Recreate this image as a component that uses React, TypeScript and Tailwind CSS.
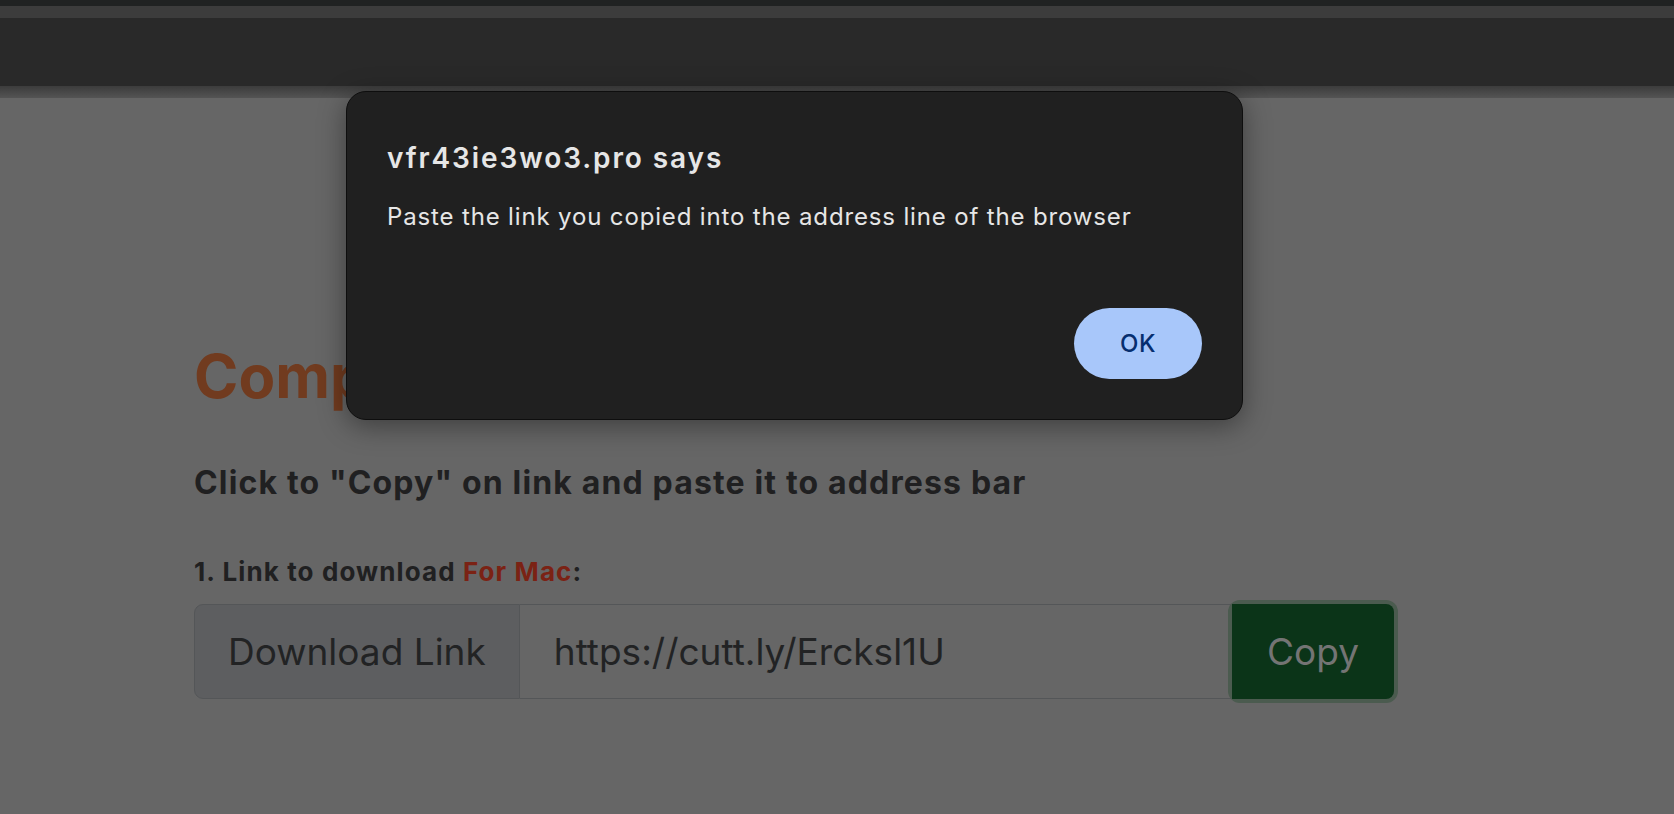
import React from "react";

export default function App() {
  return (
    <div
      className="relative w-full h-[814px] overflow-hidden bg-[#666666]"
      style={{ fontFamily: "Inter, 'Noto Sans', 'Liberation Sans', sans-serif" }}
    >
      {/* browser chrome (dimmed) */}
      <div className="h-[6px] bg-[#202222]" />
      <div className="h-[12px] bg-[#3c3c3c]" />
      <div className="h-[68px] bg-[#292929]" />
      <div className="h-[12px] bg-gradient-to-b from-[#3c3c3c] to-[#545454]" />

      {/* page content */}
      <div className="pl-[194px] pt-[248px] flex flex-col">
        <h1 className="text-[60px] leading-none font-bold text-[#713b1f] whitespace-nowrap">
          Complete steps
        </h1>
        <h2 className="mt-[61px] text-[32px] leading-none font-bold text-[#202021] tracking-[1.15px]">
          Click to "Copy" on link and paste it to address bar
        </h2>
        <p className="mt-[60px] text-[26px] leading-none font-bold text-[#202021] tracking-[1.1px]">
          1. Link to download <span className="text-[#7b2214]">For Mac</span>:
        </p>
        <div className="mt-[19px] flex w-[1200px] h-[95px]">
          <div className="flex items-center px-[33px] bg-[#5d5e60] border border-[#545658] rounded-l-[9px] text-[37px] text-[#222324]">
            Download Link
          </div>
          <div className="flex-1 flex items-center pl-[34px] border-y border-[#545658] text-[37px] text-[#222324]">
            https://cutt.ly/Ercksl1U
          </div>
          <div className="relative">
            <div className="absolute -inset-[4px] rounded-[12px] bg-[#4b5b4f]" />
            <div className="relative h-full flex items-center px-[35px] bg-[#0b3418] rounded-r-[8px] text-[37px] text-[#747474]">
              Copy
            </div>
          </div>
        </div>
      </div>

      {/* alert dialog */}
      <div className="absolute left-[346px] top-[91px] w-[897px] h-[329px] flex flex-col bg-[#202020] border border-[#0e0e0e] rounded-[20px] shadow-[0_6px_28px_rgba(0,0,0,0.4)] px-[40px] pt-[52px] pb-[40px]">
        <div className="text-[28px] leading-none font-semibold text-[#e6e6e6] tracking-[1.9px]">
          vfr43ie3wo3.pro says
        </div>
        <div className="mt-[33px] text-[24px] leading-none text-[#e6e6e6] tracking-[0.85px]">
          Paste the link you copied into the address line of the browser
        </div>
        <div className="mt-auto flex justify-end">
          <div className="w-[128px] h-[71px] rounded-full bg-[#a8c7fa] flex items-center justify-center text-[24px] font-medium text-[#062e6f] tracking-[0.5px]">
            OK
          </div>
        </div>
      </div>
    </div>
  );
}
